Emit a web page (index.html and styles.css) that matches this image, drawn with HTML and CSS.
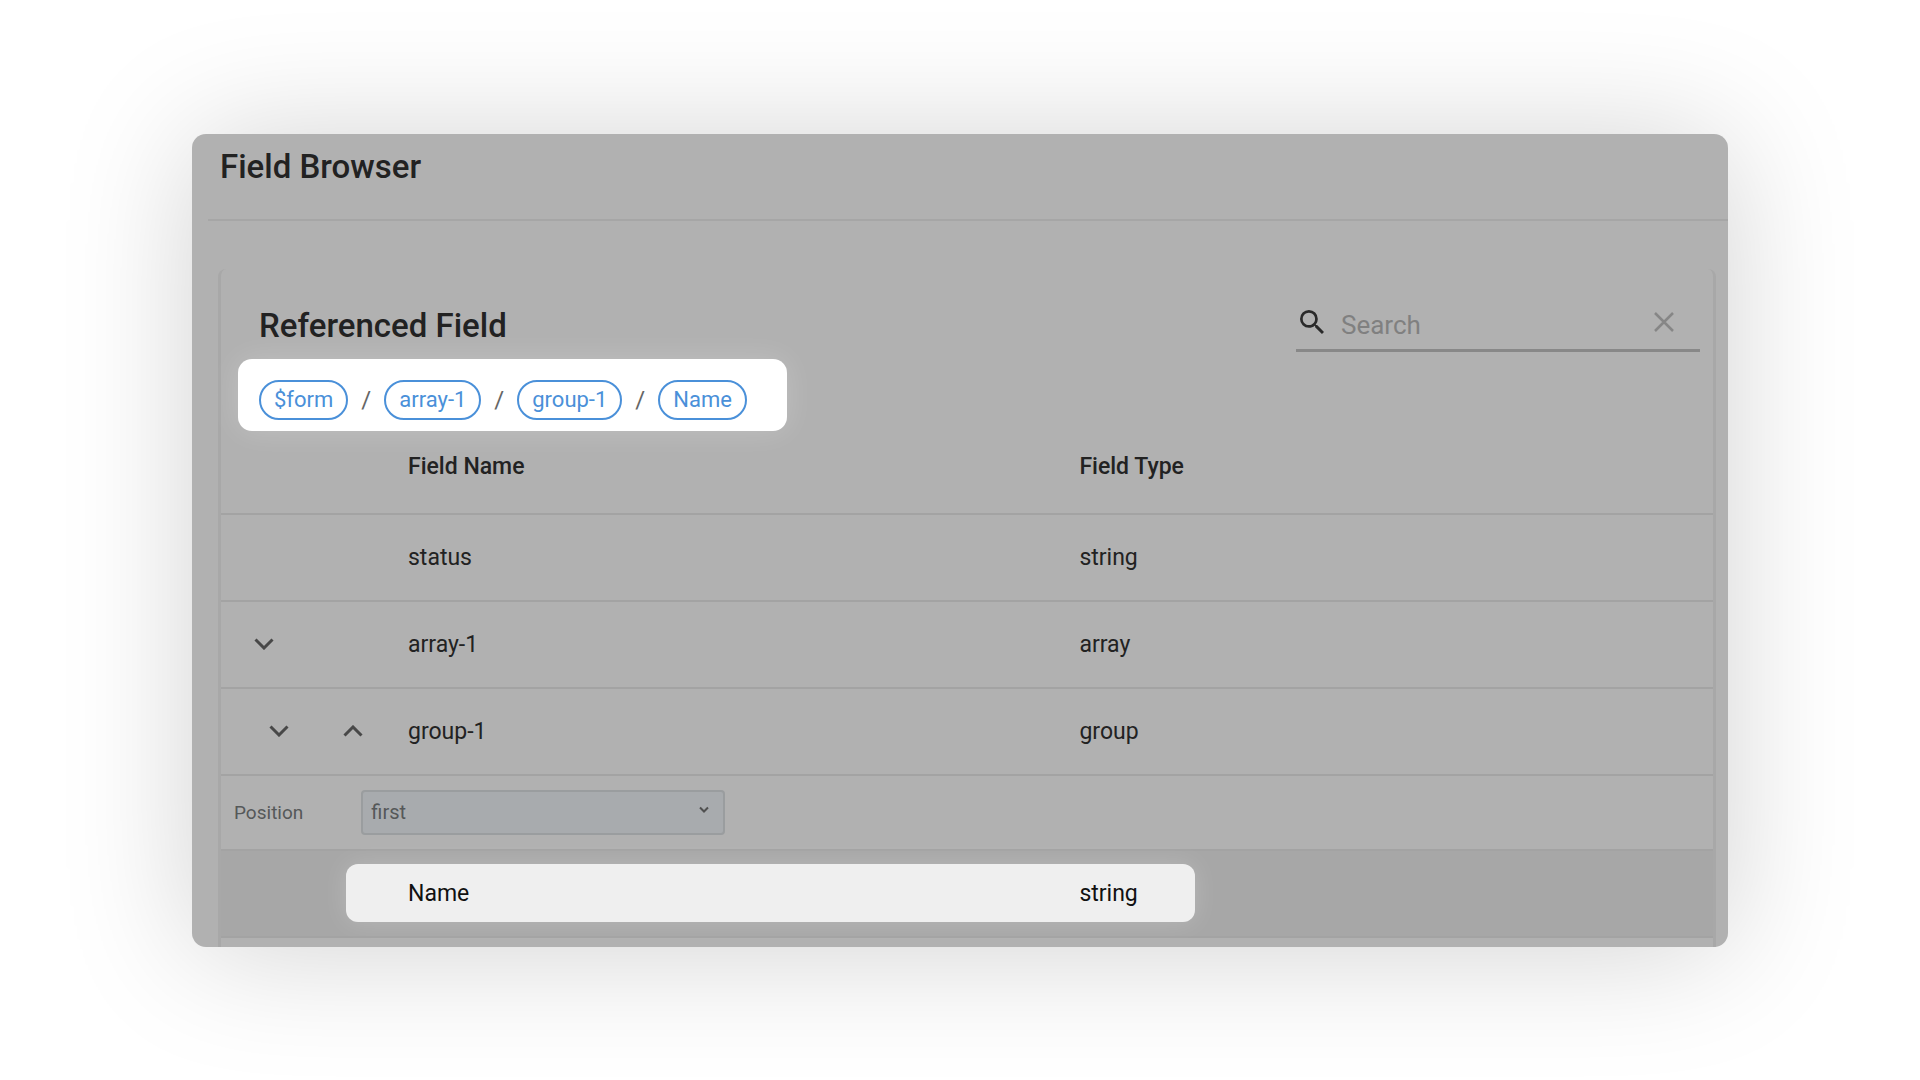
FILE: index.html
```
<!DOCTYPE html>
<html lang="en">
<head>
  <meta charset="UTF-8">
  <meta name="viewport" content="width=device-width, initial-scale=1.0">
  <title>Field Browser</title>
  <link rel="stylesheet" href="styles.css">
</head>
<body>
  <main class="browser">
    <header class="browser-header">
      <h1>Field Browser</h1>
    </header>

    <section class="panel">
      <div class="panel-top">
        <h2>Referenced Field</h2>
        <div class="search">
          <svg class="search-icon" viewBox="3 3 17.5 17.5" aria-hidden="true">
            <path d="M15.5 14h-.79l-.28-.27A6.47 6.47 0 0 0 16 9.5 6.5 6.5 0 1 0 9.5 16c1.61 0 3.09-.59 4.23-1.57l.27.28v.79l5 4.99L20.49 19l-4.99-5zm-6 0C7.01 14 5 11.99 5 9.5S7.01 5 9.5 5 14 7.01 14 9.5 11.99 14 9.5 14z"/>
          </svg>
          <input type="text" placeholder="Search" aria-label="Search">
          <button type="button" class="clear" aria-label="Clear search">
            <svg viewBox="0 0 20 20"><path d="M1 1l18 18M19 1L1 19"/></svg>
          </button>
        </div>
      </div>

      <nav class="breadcrumb" aria-label="Field path">
        <button type="button" class="chip">$form</button>
        <span class="slash">/</span>
        <button type="button" class="chip">array-1</button>
        <span class="slash">/</span>
        <button type="button" class="chip">group-1</button>
        <span class="slash">/</span>
        <button type="button" class="chip">Name</button>
      </nav>

      <table class="fields">
        <thead>
          <tr>
            <th class="col-toggle"></th>
            <th class="col-name">Field Name</th>
            <th>Field Type</th>
          </tr>
        </thead>
        <tbody>
          <tr>
            <td></td>
            <td>status</td>
            <td>string</td>
          </tr>
          <tr>
            <td>
              <div class="toggles">
                <button type="button" class="toggle" aria-label="Expand array-1">
                  <svg viewBox="0 0 20 12"><path d="M1.5 1.5l8.5 8.5 8.5-8.5"/></svg>
                </button>
              </div>
            </td>
            <td>array-1</td>
            <td>array</td>
          </tr>
          <tr>
            <td>
              <div class="toggles nested">
                <button type="button" class="toggle" aria-label="Expand group-1">
                  <svg viewBox="0 0 20 12"><path d="M1.5 1.5l8.5 8.5 8.5-8.5"/></svg>
                </button>
                <button type="button" class="toggle" aria-label="Hide position">
                  <svg viewBox="0 0 20 12"><path d="M1.5 10.5L10 2l8.5 8.5"/></svg>
                </button>
              </div>
            </td>
            <td>group-1</td>
            <td>group</td>
          </tr>
          <tr class="position-row">
            <td colspan="3">
              <div class="position">
                <label for="position">Position</label>
                <div class="select">
                  <select id="position">
                    <option>first</option>
                    <option>last</option>
                  </select>
                  <svg viewBox="0 0 10 7" aria-hidden="true"><path d="M1 1.5l4 4 4-4"/></svg>
                </div>
              </div>
            </td>
          </tr>
          <tr class="selected">
            <td></td>
            <td class="selected-name">Name</td>
            <td>string</td>
          </tr>
        </tbody>
      </table>
    </section>
  </main>
</body>
</html>
```
FILE: styles.css
```
* {
  margin: 0;
  padding: 0;
  box-sizing: border-box;
}

body {
  font-family: Roboto, sans-serif;
  background: #fff;
  color: #222;
  min-height: 100vh;
  display: flex;
  align-items: center;
  justify-content: center;
}

button, input, select {
  font: inherit;
  color: inherit;
  background: none;
  border: none;
  outline: none;
}

h1, h2 {
  font-size: 33px;
  line-height: 40px;
  font-weight: 500;
}

.browser {
  width: 80%;
  background: #b1b1b1;
  border-radius: 14px;
  box-shadow: 0 4px 130px rgba(0, 0, 0, 0.18);
  overflow: hidden;
}

.browser-header {
  margin-left: 16px;
  padding: 13px 12px 32px;
  border-bottom: 2px solid #a6a6a6;
}

.panel {
  margin: 48px 12px 0 26px;
  padding-bottom: 9px;
  border: solid #a8a8a8;
  border-width: 0 3px;
  border-radius: 8px 8px 0 0;
}

.panel-top {
  display: flex;
  align-items: center;
  justify-content: space-between;
  padding: 34px 13px 0 38px;
}

.panel-top h2 {
  padding-bottom: 3px;
}

.search {
  width: 404px;
  height: 49px;
  display: flex;
  align-items: center;
  padding: 0 26px 8px 4px;
  border-bottom: 3px solid #888;
}

.search-icon {
  width: 24px;
  height: 24px;
  fill: #2a2a2a;
}

.search input {
  flex: 1;
  min-width: 0;
  font-size: 26px;
  padding: 6px 17px 0;
}

.search input::placeholder {
  color: #808080;
}

.clear svg {
  display: block;
  width: 20px;
  height: 20px;
  fill: none;
  stroke: #868686;
  stroke-width: 2.5;
}

.breadcrumb {
  width: fit-content;
  display: flex;
  align-items: center;
  gap: 13px;
  margin: 7px 0 0 17px;
  padding: 21px 40px 11px 21px;
  background: #fff;
  border-radius: 14px;
  box-shadow: 0 0 30px rgba(255, 255, 255, 0.2);
}

.chip {
  height: 40px;
  padding: 0 13px;
  font-size: 22px;
  color: #4a90d9;
  border: 2px solid #4a90d9;
  border-radius: 20px;
}

.slash {
  font-size: 24px;
  line-height: 40px;
  color: #666;
}

.fields {
  width: 100%;
  border-collapse: collapse;
  table-layout: fixed;
  font-size: 23px;
}

.fields th,
.fields td {
  height: 87px;
  text-align: left;
  border-bottom: 2px solid #a3a3a3;
}

.fields th {
  height: 83px;
  padding-bottom: 10px;
  font-weight: 500;
}

.col-toggle {
  width: 187px;
}

.col-name {
  width: 45%;
}

.toggles {
  display: flex;
  gap: 54px;
  padding-left: 33px;
}

.nested {
  padding-left: 48px;
}

.toggle svg {
  display: block;
  width: 20px;
  height: 12px;
  fill: none;
  stroke: #484848;
  stroke-width: 3;
}

.fields .position-row td {
  height: 75px;
}

.position {
  display: flex;
  align-items: center;
  gap: 58px;
  padding-left: 13px;
  font-size: 19px;
  color: #555859;
}

.select {
  position: relative;
  width: 364px;
}

.select select {
  appearance: none;
  width: 100%;
  height: 45px;
  padding: 0 8px;
  font-size: 20px;
  background: #a8abae;
  border: 2px solid #9a9d9f;
  border-radius: 4px;
}

.select svg {
  position: absolute;
  right: 16px;
  top: 16px;
  width: 10px;
  height: 7px;
  fill: none;
  stroke: #505050;
  stroke-width: 2;
  pointer-events: none;
}

.selected {
  position: relative;
  z-index: 0;
  background: #a7a7a7;
  color: #111;
}

.selected-name {
  position: relative;
}

/* light card behind the selected field */
.selected-name::before {
  content: "";
  position: absolute;
  z-index: -1;
  top: 13px;
  bottom: 14px;
  left: -62px;
  right: -116px;
  background: #efefef;
  border-radius: 12px;
  box-shadow: 0 0 24px rgba(255, 255, 255, 0.2);
}
```
